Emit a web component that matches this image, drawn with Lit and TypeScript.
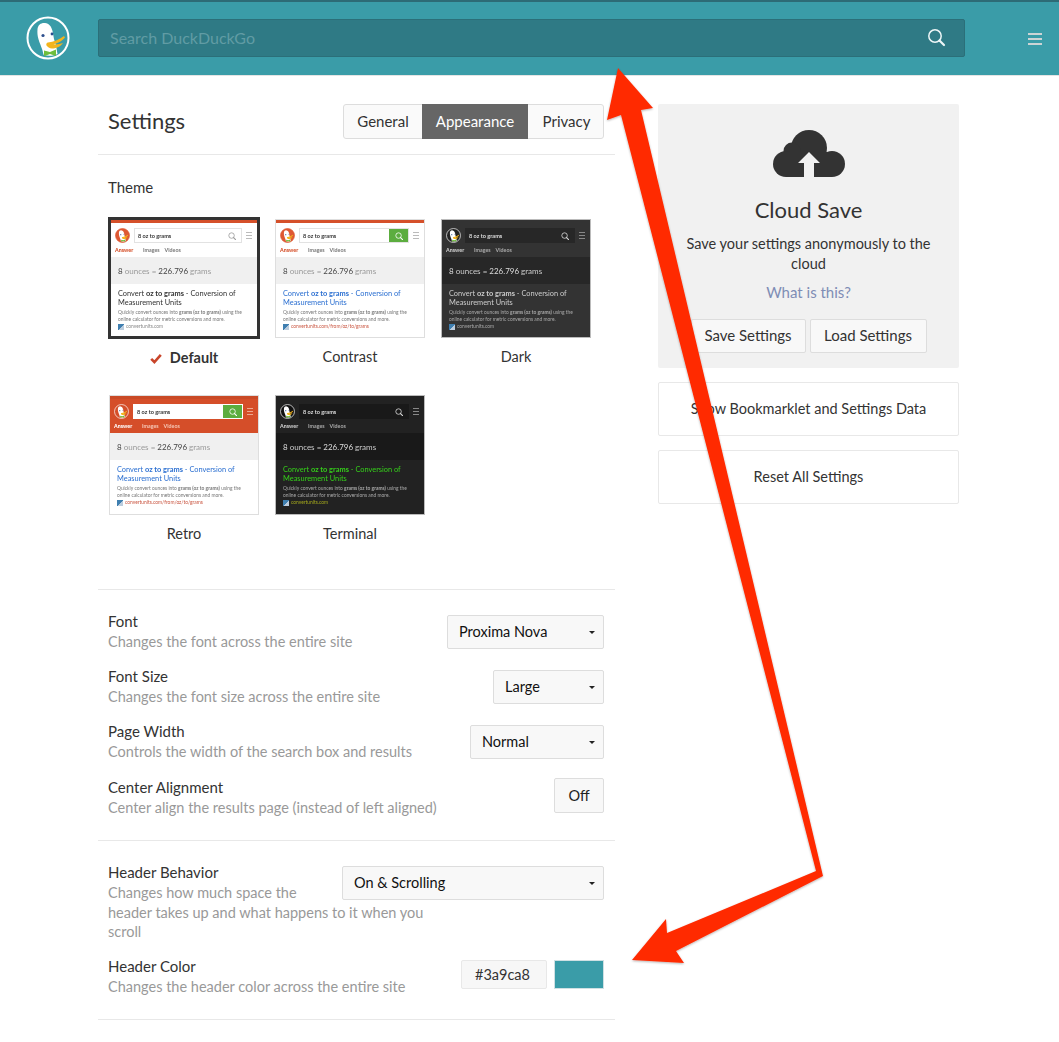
import { LitElement, html, css, svg } from "lit";
import { customElement, property } from "lit/decorators.js";

const duck = (ring: string, bg: string) => svg`
  <circle cx="22" cy="22" r="20.500" fill="${bg}" stroke="${ring}" stroke-width="2"/>
  <path d="M11.500 13C12 8.500 15.500 6.500 19 7c4 .5 6.500 3.500 7.500 8l1.500 8 2 6.500 1.500 8.500c-4 2-9 2.300-14 .8-1-6.500-3.500-10-5-15.500-1-3.500-1.300-6.500-1-10Z" fill="#fff"/>
  <path d="M22 26.500c5.500-.5 11-3 16-6.500l1 1.500c-2.500 3.500-7 5.500-11.500 6.800 3 .3 6.500-.2 9.500-1.300-2.500 3.800-7.500 5.500-11 5.500-2.500 0-4.500-1.500-5.500-3-.7-1.500.3-3 1.500-3Z" fill="#f4b41c"/>
  <circle cx="17" cy="19.500" r="1.600" fill="#2d4f8e"/>
  <circle cx="26" cy="18" r="1.400" fill="#2d4f8e"/>
  <path d="M18 34.500l6 1.500 6-2.500v6.500l-6-2-6 2.300Z" fill="#6fbe3c"/>
`;

const searchGlass = (color: string, w = 1.5) => svg`
  <circle cx="8" cy="8" r="6.200" fill="none" stroke="${color}" stroke-width="${w}"/>
  <path d="M12.500 12.500L17 17" stroke="${color}" stroke-width="${w + 0.7}" stroke-linecap="round"/>
`;

@customElement("theme-thumb")
class ThemeThumb extends LitElement {
  @property() theme = "default";
  @property({ type: Boolean }) active = false;
  @property() url = "convertunits.com";

  static styles = css`
    :host { display: block; font-family: Lato, "Liberation Sans", sans-serif; text-align: left; }
    .thumb {
      box-sizing: border-box; height: 120px; margin: 1px; border: 1px solid #dedede; overflow: hidden;
      display: flex; flex-direction: column; background: #fff; color: #333;
      --head: #fff; --box: #fff; --boxb: #e2e2e2; --boxt: #333; --tab: #777; --act: #d5502a;
      --band: #f0f0f0; --bt: #999; --bs: #444; --body: #fff; --title: #333; --desc: #777; --link: #888; --strip: #d5502a;
      --icon: #999; --btn: transparent; --ham: #bbb; --logo: #de5833; --ring: #de5833;
    }
    .active { height: 122px; margin: 0; border: 3px solid #333; }
    .contrast { --title: #2b6fd1; --link: #c9543f; --btn: #5cad3f; --icon: #fff; }
    .contrast, .dark { height: 119px; margin-top: 2px; }
    .dark { --head: #333; --box: #272727; --boxb: #272727; --boxt: #ddd; --tab: #aaa; --act: #ccc; --band: #272727; --bt: #ccc; --bs: #ddd;
      --body: #333; --title: #ccc; --desc: #aaa; --link: #aaa; --strip: #333; --icon: #ddd; --ham: #888; --logo: #222; --ring: #fff; border-color: #bbb; }
    .retro { --head: #d54e29; --boxb: #fff; --tab: #f6c9b8; --act: #fff; --title: #2b6fd1; --link: #c9543f; --btn: #5cad3f; --icon: #fff;
      --strip: #c94a26; --ham: #eda78f; --logo: #d54e29; --ring: #fff; }
    .terminal { --head: #222; --box: #191919; --boxb: #191919; --boxt: #ddd; --tab: #aaa; --act: #ccc; --band: #191919; --bt: #ccc; --bs: #ddd;
      --body: #222; --title: #35cf1a; --desc: #aaa; --link: #a4a81c; --strip: #222; --icon: #ddd; --ham: #888; --logo: #111; --ring: #fff; border-color: #bbb; }
    .strip { height: 3px; background: var(--strip); flex: none; }
    .head { background: var(--head); height: 34px; flex: none; box-sizing: border-box; padding: 5px 5px 0 4px; }
    .top { display: flex; align-items: center; gap: 4px; height: 15px; }
    .logo { width: 15px; height: 15px; flex: none; }
    .box { flex: 1; height: 15px; box-sizing: border-box; border: 1px solid var(--boxb); background: var(--box); color: var(--boxt);
      display: flex; align-items: center; justify-content: space-between; font-size: 5.600px; font-weight: bold; padding-left: 3px; }
    .btn { width: 19px; height: 13px; background: var(--btn); display: flex; align-items: center; justify-content: center; }
    .btn svg { width: 8px; height: 8px; }
    .ham { width: 6px; height: 5px; flex: none; border-top: 1px solid var(--ham); border-bottom: 1px solid var(--ham); }
    .ham::after { content: ""; display: block; height: 1px; margin-top: 2px; background: var(--ham); }
    .tabs { display: flex; font-size: 5.300px; color: var(--tab); margin-top: 4px; line-height: 7px; font-weight: bold; }
    .tabs b { color: var(--act); width: 28px; }
    .tabs span { margin-right: 5px; }
    .band { background: var(--band); height: 27px; flex: none; display: flex; align-items: center; padding-left: 7px; font-size: 8px; color: var(--bt); }
    .band em { font-style: normal; color: var(--bs); }
    .res { background: var(--body); flex: 1; padding: 5px 4px 0 7px; }
    .title { font-size: 7.400px; line-height: 9px; color: var(--title); }
    .desc { font-size: 4.900px; line-height: 6.500px; color: var(--desc); margin-top: 2px; white-space: nowrap; }
    .link { display: flex; align-items: center; gap: 2px; font-size: 4.900px; line-height: 7px; color: var(--link); margin-top: 1px; }
    .fav { width: 6px; height: 6px; background: linear-gradient(135deg, #3f7fb0 50%, #bcd 50%); }
    .blur { filter: blur(0.25px); }
  `;

  render() {
    const t = this.theme;
    return html`
      <div class="thumb ${t} ${this.active ? "active" : ""}">
        <div class="strip"></div>
        <div class="head blur">
          <div class="top">
            <svg class="logo" viewBox="0 0 44 44">${duck("var(--ring)", "var(--logo)")}</svg>
            <div class="box">8 oz to grams
              <div class="btn"><svg viewBox="0 0 18 18">${searchGlass("var(--icon)", 1.8)}</svg></div>
            </div>
            <div class="ham"></div>
          </div>
          <div class="tabs"><b>Answer</b><span>Images</span><span>Videos</span></div>
        </div>
        <div class="band blur"><span><em>8</em> ounces = <em>226.796</em> grams</span></div>
        <div class="res blur">
          <div class="title">Convert <b>oz to grams</b> - Conversion of Measurement Units</div>
          <div class="desc">Quickly convert ounces into <b>grams (oz to grams)</b> using the<br />online calculator for metric conversions and more.</div>
          <div class="link"><span class="fav"></span>${this.url}</div>
        </div>
      </div>
    `;
  }
}

@customElement("app-root")
class AppRoot extends LitElement {
  static styles = css`
    :host { display: block; position: relative; height: 1042px; overflow: hidden; background: #fff; color: #333;
      font-family: Lato, "Liberation Sans", sans-serif; font-size: 15px; }
    .header { height: 76px; box-sizing: border-box; background: #3a9ca8; border-top: 2px solid #2d6b76; border-bottom: 1px solid #e4e4e4; padding-bottom: 1px;
      display: flex; align-items: center; }
    .logo { width: 44px; height: 44px; margin-left: 26px; flex: none; }
    .search { margin-left: 28px; width: 867px; height: 38px; box-sizing: border-box; background: #2f7a85; border: 1px solid #2b6f79; border-radius: 2px;
      display: flex; align-items: center; justify-content: space-between; padding: 0 17px 2px 11px; color: #619ca4; font-size: 16px; }
    .search svg { width: 20px; height: 20px; margin-top: 2px; }
    .menu { margin-left: 63px; margin-top: 1px; width: 14px; display: flex; flex-direction: column; gap: 3px; }
    .menu i { height: 2px; background: #ccd4d5; display: block; }
    .page { display: flex; gap: 43px; padding: 28px 0 0 98px; }
    .left { width: 517px; flex: none; }
    .right { width: 301px; flex: none; }
    .top { display: flex; justify-content: space-between; align-items: flex-start; height: 51px; box-sizing: border-box; padding: 0 11px 15px 10px; border-bottom: 1px solid #e8e8e8; }
    h1 { font-size: 22px; font-weight: 400; margin: 0; color: #333; line-height: 34px; }
    .tabs { display: flex; height: 35px; border: 1px solid #ddd; border-radius: 3px; box-sizing: border-box; background: #fafafa; }
    .tabs span { display: flex; align-items: center; justify-content: center; color: #333; box-sizing: border-box; padding-bottom: 2px; }
    .t1 { width: 78px; } .t2 { width: 106px; } .tabs .t3 { width: 75px; padding-left: 2px; }
    .tabs .on { background: #666; color: #fff; margin: -1px 0; }
    .theme { padding: 0 10px; height: 434px; }
    .theme h2 { font-size: 15px; font-weight: 400; margin: 0; padding-top: 22px; line-height: 20px; color: #333; }
    .grid { display: grid; grid-template-columns: repeat(3, 152px); column-gap: 14px; row-gap: 26px; margin-top: 20px; }
    .cell { text-align: center; }
    .label { margin-top: 9px; line-height: 20px; font-size: 14.500px; display: flex; justify-content: center; align-items: center; gap: 8px; }
    .label svg { width: 12px; height: 11px; }
    .label.sel { font-weight: 700; }
    .section { border-top: 1px solid #e8e8e8; padding: 21px 11px 8.500px 10px; }
    .section.last { border-bottom: 1px solid #e8e8e8; padding-bottom: 22px; }
    .row { display: flex; justify-content: space-between; align-items: flex-start; height: 55.200px; }
    .row.tall { height: 94px; }
    .row.end { height: 41px; }
    .txt { line-height: 20px; font-size: 15px; color: #333; }
    .txt p { margin: 1px 0 0; color: #999; line-height: 19.500px; font-size: 14.500px; }
    .narrow { width: 215px; white-space: nowrap; }
    .sel-box { margin-top: 4px; height: 34px; box-sizing: border-box; border: 1px solid #ddd; border-radius: 2px; background: #f8f8f8; color: #111;
      display: flex; align-items: center; justify-content: space-between; padding: 0 8px 2px 11px; font-size: 14.500px; }
    .sel-box::after { content: ""; border-left: 3px solid transparent; border-right: 3px solid transparent; border-top: 3px solid #222; margin-top: 2px; }
    .off { margin-top: 1px; width: 50px; height: 35px; box-sizing: border-box; border: 1px solid #ddd; border-radius: 2px; background: #f8f8f8; display: flex; align-items: center; justify-content: center; color: #222; font-size: 14.500px; }
    .color { display: flex; gap: 7px; margin-top: 4px; }
    .hex { width: 86px; height: 29px; box-sizing: border-box; border: 1px solid #e8e8e8; background: #f7f7f7; border-radius: 2px; display: flex; align-items: center; justify-content: center; font-size: 14.500px; color: #333; padding-right: 3px; }
    .swatch { width: 50px; height: 29px; box-sizing: border-box; background: #3a9ca8; border: 1px solid #cfe0e3; }
    .cloud { background: #f1f1f1; border-radius: 2px; height: 264px; box-sizing: border-box; padding-top: 26px; text-align: center; }
    .cloud svg { width: 72px; height: 47px; display: block; margin: 0 auto; }
    .cloud h3 { font-size: 22px; font-weight: 400; margin: 19px 0 0; line-height: 28px; color: #333; }
    .cloud p { margin: 10px 15px 0; line-height: 20px; font-size: 14.500px; color: #333; }
    .what { color: #7f8db5; margin-top: 8px; line-height: 20px; font-size: 15px; }
    .btns { display: flex; justify-content: center; gap: 4px; margin-top: 17px; }
    .btn { height: 34px; box-sizing: border-box; border: 1px solid #ddd; border-radius: 2px; background: #f8f8f8; display: flex; align-items: center; justify-content: center; font-size: 15px; color: #333; padding-bottom: 2px; }
    .b1 { width: 115px; } .b2 { width: 117px; }
    .wide { margin-top: 14px; height: 54px; box-sizing: border-box; border: 1px solid #e8e8e8; border-radius: 2px; display: flex; align-items: center; justify-content: center; font-size: 14.500px; color: #333; padding-bottom: 1px; }
    .arrow { position: absolute; left: 0; top: 0; width: 1059px; height: 1042px; pointer-events: none; }
  `;

  private thumb(theme: string, name: string, url: string, active = false) {
    return html`<div class="cell">
      <theme-thumb .theme=${theme} .url=${url} .active=${active}></theme-thumb>
      <div class="label ${active ? "sel" : ""}">
        ${active ? html`<svg viewBox="0 0 12 11"><path d="M1.200 5.800L4.400 9 10.800 1.800" fill="none" stroke="#c9452a" stroke-width="2.600"/></svg>` : ""}${name}
      </div>
    </div>`;
  }

  private row(title: string, sub: unknown, control: unknown, cls = "") {
    return html`<div class="row ${cls}">
      <div class="txt ${cls === "tall" ? "narrow" : ""}">${title}<p>${sub}</p></div>
      ${control}
    </div>`;
  }

  private select(text: string, width: number) {
    return html`<div class="sel-box" style="width:${width}px">${text}</div>`;
  }

  render() {
    return html`
      <div class="header">
        <svg class="logo" viewBox="0 0 44 44">${duck("#fff", "#3a9ca8")}</svg>
        <div class="search">Search DuckDuckGo
          <svg viewBox="0 0 20 20">${searchGlass("#eef6f7", 1.500)}</svg>
        </div>
        <div class="menu"><i></i><i></i><i></i></div>
      </div>
      <div class="page">
        <div class="left">
          <div class="top">
            <h1>Settings</h1>
            <div class="tabs"><span class="t1">General</span><span class="on t2">Appearance</span><span class="t3">Privacy</span></div>
          </div>
          <div class="theme">
            <h2>Theme</h2>
            <div class="grid">
              ${this.thumb("default", "Default", "convertunits.com", true)}
              ${this.thumb("contrast", "Contrast", "convertunits.com/from/oz/to/grams")}
              ${this.thumb("dark", "Dark", "convertunits.com")}
              ${this.thumb("retro", "Retro", "convertunits.com/from/oz/to/grams")}
              ${this.thumb("terminal", "Terminal", "convertunits.com")}
            </div>
          </div>
          <div class="section">
            ${this.row("Font", "Changes the font across the entire site", this.select("Proxima Nova", 157))}
            ${this.row("Font Size", "Changes the font size across the entire site", this.select("Large", 111))}
            ${this.row("Page Width", "Controls the width of the search box and results", this.select("Normal", 134))}
            ${this.row("Center Alignment", "Center align the results page (instead of left aligned)", html`<div class="off">Off</div>`)}
          </div>
          <div class="section last">
            ${this.row("Header Behavior", html`Changes how much space the<br />header takes up and what happens to it when you<br />scroll`, this.select("On & Scrolling", 262), "tall")}
            ${this.row("Header Color", "Changes the header color across the entire site", html`<div class="color"><div class="hex">#3a9ca8</div><div class="swatch"></div></div>`, "end")}
          </div>
        </div>
        <div class="right">
          <div class="cloud">
            <svg viewBox="0 0 72 47">
              <g fill="#333">
                <circle cx="36" cy="18" r="18"/><circle cx="19" cy="21" r="8.500"/><circle cx="13" cy="34" r="13"/><circle cx="59" cy="34" r="13"/>
                <rect x="13" y="22" width="46" height="25"/>
              </g>
              <path d="M36 22l11 11h-6v14h-10v-14h-6Z" fill="#f1f1f1"/>
            </svg>
            <h3>Cloud Save</h3>
            <p>Save your settings anonymously to the cloud</p>
            <div class="what">What is this?</div>
            <div class="btns"><div class="btn b1">Save Settings</div><div class="btn b2">Load Settings</div></div>
          </div>
          <div class="wide">Show Bookmarklet and Settings Data</div>
          <div class="wide">Reset All Settings</div>
        </div>
      </div>
      <svg class="arrow" viewBox="0 0 1059 1042">
        <defs><filter id="s" x="-5%" y="-5%" width="110%" height="110%"><feDropShadow dx="0" dy="1" stdDeviation="1" flood-color="#000" flood-opacity=".3"/></filter></defs>
        <path filter="url(#s)" fill="#ff2a00" d="M618 68L653 108 641 110 823 876 676 951 684 963 632 960 666 919 667 933 816 871 621 115 607 120Z"/>
      </svg>
    `;
  }
}
